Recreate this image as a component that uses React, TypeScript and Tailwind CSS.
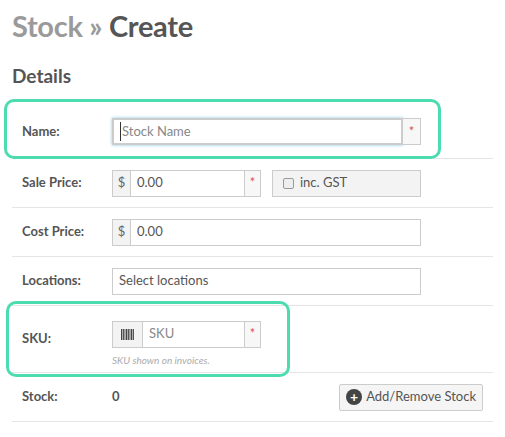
export default function App() {
  const font = { fontFamily: 'Lato, "Open Sans", sans-serif' }
  const input = 'h-[27px] border border-[#ccc] bg-white px-[6px] text-[13px] text-[#555] flex items-center'
  const addon = 'h-[27px] border border-[#ccc] bg-[#f3f3f3] flex items-center justify-center text-[13px] text-[#666]'
  const row = 'flex items-center border-b border-[#e5e5e5] pl-[10px]'
  const label = 'w-[90px] text-[13px] font-bold text-[#555]'
  return (
    <div style={font} className="relative h-[437px] w-[505px] bg-white">
      <div className="px-[12px] pt-[7px] text-[29px] font-bold leading-[38px] tracking-[-0.3px]">
        <span className="text-[#9a9a9a]">Stock » </span>
        <span className="text-[#555]">Create</span>
      </div>
      <div className="px-[12px] pt-[18px] text-[19px] font-bold leading-[26px] text-[#555]">Details</div>
      <div className="mx-[12px] mt-[8px] w-[481px]">
        <div className={`${row} h-[62px] pt-[8px]`}>
          <div className={label}>Name:</div>
          <div className="flex">
            <div className={`${input} w-[291px] border-2 border-[#3aa0c8] text-[#888] shadow-[0_0_3px_#7fc6e0]`}>
              <span className="border-l border-[#333] pl-[1px]">Stock Name</span>
            </div>
            <div className={`${addon} w-[18px] border-l-0 text-[#d9534f] bg-[#f7f7f7]`}>*</div>
          </div>
        </div>
        <div className={`${row} h-[49px]`}>
          <div className={label}>Sale Price:</div>
          <div className="flex">
            <div className={`${addon} w-[19px]`}>$</div>
            <div className={`${input} w-[114px] border-l-0`}>0.00</div>
            <div className={`${addon} w-[16px] border-l-0 bg-[#f7f7f7] text-[#d9534f]`}>*</div>
          </div>
          <div className={`${addon} ml-[11px] w-[149px] justify-start gap-[6px] px-[10px] bg-[#f2f2f2]`}>
            <span className="h-[11px] w-[11px] rounded-[2px] border border-[#999] bg-[#eee]" />
            <span className="text-[#555]">inc. GST</span>
          </div>
        </div>
        <div className={`${row} h-[49px]`}>
          <div className={label}>Cost Price:</div>
          <div className="flex">
            <div className={`${addon} w-[19px]`}>$</div>
            <div className={`${input} w-[290px] border-l-0`}>0.00</div>
          </div>
        </div>
        <div className={`${row} h-[49px]`}>
          <div className={label}>Locations:</div>
          <div className={`${input} w-[309px]`}>Select locations</div>
        </div>
        <div className={`${row} h-[67px]`}>
          <div className={label}>SKU:</div>
          <div className="pt-[10px]">
            <div className="flex">
              <div className={`${addon} w-[31px]`}>
                <svg width="14" height="11" viewBox="0 0 14 11">
                  {[0, 2, 3.5, 5, 7, 8.5, 10, 12].map((x, i) => (
                    <rect key={i} x={x} y="0" width={i % 3 === 0 ? 1.4 : 0.9} height="11" fill="#444" />
                  ))}
                </svg>
              </div>
              <div className={`${input} w-[102px] border-l-0 text-[#888]`}>SKU</div>
              <div className={`${addon} w-[16px] border-l-0 bg-[#f7f7f7] text-[#d9534f]`}>*</div>
            </div>
            <div className="mt-[5px] text-[10px] italic text-[#aaa]">SKU shown on invoices.</div>
          </div>
        </div>
        <div className={`${row} h-[49px]`}>
          <div className={label}>Stock:</div>
          <div className="flex-1 text-[13px] font-bold text-[#555]">0</div>
          <button className="mr-[10px] flex h-[27px] items-center gap-[4px] rounded-[2px] border border-[#ccc] bg-[#f5f5f5] px-[6px] text-[13px] text-[#555]">
            <span className="flex h-[16px] w-[16px] items-center justify-center rounded-full bg-[#444] text-[14px] font-bold leading-none text-white">+</span>
            Add/Remove Stock
          </button>
        </div>
      </div>
      <div className="absolute left-[4px] top-[99px] h-[60px] w-[437px] rounded-[10px] border-[3px] border-[#4ddbb0]" />
      <div className="absolute left-[6px] top-[301px] h-[76px] w-[284px] rounded-[10px] border-[3px] border-[#4ddbb0]" />
    </div>
  )
}
